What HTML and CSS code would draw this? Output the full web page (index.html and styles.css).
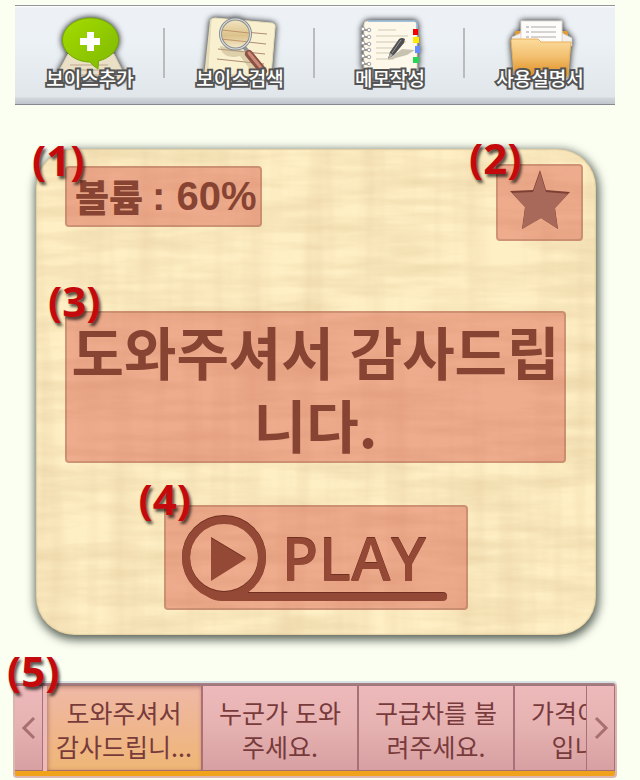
FILE: index.html
```html
<!DOCTYPE html>
<html lang="ko">
<head>
<meta charset="utf-8">
<meta name="viewport" content="width=device-width, initial-scale=1">
<title>보이스</title>
<link rel="stylesheet" href="styles.css">
</head>
<body>
<nav class="toolbar">
  <button class="tool" type="button">
    <svg class="tool-icon" viewBox="0 0 90 68" aria-hidden="true">
      <defs><linearGradient id="green" x1="0" y1="0" x2="1" y2="1"><stop offset="0" stop-color="#a5dc00"/><stop offset="1" stop-color="#7db800"/></linearGradient></defs>
      <path d="M23 42H69L82 68H9Z" fill="#e9e0c6" stroke="#d3c9ae"/>
      <path d="M25 53H63M22 58H67M19 63H71" stroke="#c0a68d"/>
      <path d="M45.500 6C61 6 73.500 16 73.500 28C73.500 38 65 46 53.500 49L53 57Q48 54 45 50C30 50 17.500 40 17.500 28C17.500 16 30 6 45.500 6Z" fill="url(#green)" stroke="#72a800"/>
      <path d="M42 20H49V26H55V33H49V39H42V33H35V26H42Z" fill="#fff"/>
    </svg>
    <span class="tool-label">보이스추가</span>
  </button>
  <button class="tool" type="button">
    <svg class="tool-icon" viewBox="0 0 90 68" aria-hidden="true">
      <defs><linearGradient id="lens" x1="0" y1="0" x2="0" y2="1"><stop offset="0" stop-color="#f2e7c4"/><stop offset=".55" stop-color="#dcc28a"/><stop offset="1" stop-color="#f5ecd0"/></linearGradient></defs>
      <path d="M15 8Q16 6 20 6L19 60L76 66V68L9 64Z" fill="#e6dcbb"/>
      <path d="M20 6L77 11Q81 12 80 16L76 64Q76 68 72 67L16 60Q12 59 13 55L16 10Q16 6 20 6Z" fill="#f9f0cf" stroke="#e6dcb8"/>
      <path d="M27 18L72 22M25 27L71 32M23 37L70 42M22 47L69 52" stroke="#b08b76"/>
      <path d="M25 34Q27 48 45 44L54 56L66 62L54 40Z" fill="#b9a67d" opacity=".45"/>
      <circle cx="40.500" cy="22" r="15" fill="url(#lens)"/>
      <path d="M27 18L54 21M26 27L54 30" stroke="#b07d57" stroke-width="1" opacity=".7"/>
      <path d="M49 35L54 41" stroke="#929292" stroke-width="4"/>
      <path d="M54 42L68 59" stroke="#8d5144" stroke-width="8" stroke-linecap="round"/>
      <path d="M54 41L67 57" stroke="#ca8b78" stroke-width="3" stroke-linecap="round"/>
      <circle cx="40.500" cy="22" r="15" fill="none" stroke="#888c8e" stroke-width="3"/>
      <circle cx="40.500" cy="22" r="15" fill="none" stroke="#dadddd" stroke-width="1.200"/>
    </svg>
    <span class="tool-label">보이스검색</span>
  </button>
  <button class="tool" type="button">
    <svg class="tool-icon" viewBox="0 0 90 68" aria-hidden="true">
      <path d="M23 9H69Q72 9 72 12V66H19V13Q19 9 23 9Z" fill="#fdf8e9" stroke="#e4dcc5"/>
      <path d="M23 9H69Q72 9 72 13V17" fill="none" stroke="#8db3d8" stroke-width="1.500"/>
      <path d="M33 18H51M31 24H63M31 30H61M31 36H54M31 41H52M31 47H49" stroke="#cfcbb4"/>
      <g fill="none" stroke="#777" stroke-width="1.500"><path d="M24 18H18M24 25H18M24 32H18M24 38H18M24 45H18M24 52H18M24 59H18"/></g>
      <g fill="#fff" stroke="#a2a2a2"><circle cx="24" cy="18" r="1.800"/><circle cx="24" cy="25" r="1.800"/><circle cx="24" cy="32" r="1.800"/><circle cx="24" cy="38" r="1.800"/><circle cx="24" cy="45" r="1.800"/><circle cx="24" cy="52" r="1.800"/><circle cx="18" cy="17" r="1.800"/><circle cx="18" cy="24" r="1.800"/><circle cx="18" cy="31" r="1.800"/><circle cx="18" cy="37" r="1.800"/><circle cx="18" cy="44" r="1.800"/><circle cx="18" cy="51" r="1.800"/></g>
      <path d="M43 48L57 37L70 38L62 43Z" fill="#a59e8c" opacity=".6"/>
      <path d="M43 47L45 40L54 27Q57 25 60 27L59 31L49 43Z" fill="#505050"/>
      <path d="M47 41L56 28" stroke="#999"/>
      <path d="M43 47L45 41L48 43Z" fill="#aaa"/>
      <path d="M68 17H73V23H68Z" fill="#f20000"/><path d="M68 25H74V31H68Z" fill="#ffe900"/><path d="M70 34H75V41H70Z" fill="#648dff"/><path d="M68 45H74V51H68Z" fill="#27d654"/>
    </svg>
    <span class="tool-label">메모작성</span>
  </button>
  <button class="tool" type="button">
    <svg class="tool-icon" viewBox="0 0 90 68" aria-hidden="true">
      <defs><linearGradient id="folder" x1="0" y1="0" x2="0" y2="1"><stop offset="0" stop-color="#fbdc9c"/><stop offset=".45" stop-color="#f3c071"/><stop offset="1" stop-color="#df8c1e"/></linearGradient></defs>
      <path d="M21 19H71Q73 19 73 22V35H20V22Q20 19 21 19Z" fill="#e39a32"/>
      <path d="M17 25L26 21V34H17ZM67 21L77 26V34H67Z" fill="#f2f1ef" stroke="#cfcbc5" stroke-width=".600"/>
      <path d="M26 9H67V34H26Z" fill="#fefcfa" stroke="#e2ddd8"/>
      <path d="M36 15H61M36 20H61M36 25H61" stroke="#aaa"/><path d="M31 15H34M31 20H34M31 25H34" stroke="#999"/>
      <path d="M16 28Q17 27 19 27H43L46 30H76L73 62Q73 65 70 65H23Q20 65 19 61Z" fill="url(#folder)" stroke="#e8af58"/>
    </svg>
    <span class="tool-label">사용설명서</span>
  </button>
</nav>

<main class="card">
  <svg class="grain" aria-hidden="true">
    <filter id="fiber" x="0" y="0" width="100%" height="100%">
      <feTurbulence type="fractalNoise" baseFrequency="0.010 0.070" numOctaves="4" seed="8"/>
      <feColorMatrix values="0 0 0 0 .74  0 0 0 0 .58  0 0 0 0 .32  .900 0 0 0 -.300"/>
    </filter>
    <filter id="weave" x="0" y="0" width="100%" height="100%">
      <feTurbulence type="fractalNoise" baseFrequency="0.040 0.003" numOctaves="3" seed="3"/>
      <feColorMatrix values="0 0 0 0 .78  0 0 0 0 .58  0 0 0 0 .34  .800 0 0 0 -.340"/>
    </filter>
    <rect width="100%" height="100%" filter="url(#fiber)"/>
    <rect width="100%" height="100%" filter="url(#weave)"/>
  </svg>
  <div class="card-top">
    <div class="zone volume"><b class="mark">(1)</b><span>볼륨</span> <span class="volume-value">: 60%</span></div>
    <button class="zone favorite" type="button" aria-label="즐겨찾기">
      <b class="mark">(2)</b>
      <svg class="star" viewBox="0 0 62 62" aria-hidden="true">
        <defs><clipPath id="star-clip"><path d="M31 1L37 21L61 23L46 39L49 60L32 49L13 60L16 38L1 22L24 21Z"/></clipPath></defs>
        <g clip-path="url(#star-clip)">
          <path d="M0 0H62V62H0Z" fill="#7e3f35"/>
          <path class="star-face" d="M31 3L37 23L61 25L46 41L49 62L32 51L13 62L16 40L1 24L24 23Z"/>
        </g>
      </svg>
    </button>
  </div>
  <section class="zone message"><b class="mark">(3)</b>도와주셔서 감사드립니다.</section>
  <button class="zone play" type="button">
    <b class="mark">(4)</b>
    <svg class="play-art" viewBox="0 0 300 101" aria-hidden="true">
      <g class="carved">
        <circle class="ring" cx="58" cy="51" r="38"/>
        <path d="M58 86Q74 86 84 78L81 86H277A4 4 0 0 1 277 94H56Q48 94 42 90L58 88Z"/>
        <path d="M45 31L80 52L45 74Z"/>
      </g>
    </svg>
    <span class="play-label">PLAY</span>
  </button>
</main>

<section class="strip">
  <b class="mark">(5)</b>
  <button class="arrow" type="button" aria-label="이전"><svg class="chevron" viewBox="0 0 16 26" aria-hidden="true"><path d="M13 3L3 13L13 23"/></svg></button>
  <div class="phrases">
    <button class="phrase selected" type="button">도와주셔서<br>감사드립니...</button>
    <button class="phrase" type="button">누군가 도와<br>주세요.</button>
    <button class="phrase" type="button">구급차를 불<br>려주세요.</button>
    <button class="phrase" type="button">가격이 얼마<br>입니까?</button>
  </div>
  <button class="arrow" type="button" aria-label="다음"><svg class="chevron" viewBox="0 0 16 26" aria-hidden="true"><path d="M3 3L13 13L3 23"/></svg></button>
</section>
</body>
</html>
```
FILE: styles.css
```css
* { box-sizing: border-box; }
body {
  margin: 0;
  padding: 5px 25px 2px 15px;
  background: #fbfff2;
  font-family: "Noto Sans CJK KR", sans-serif;
}
button {
  margin: 0;
  padding: 0;
  border: 0;
  background: none;
  color: inherit;
  font: inherit;
}
svg { display: block; }

.toolbar {
  display: grid;
  grid-template-columns: repeat(4, 1fr);
  height: 100px;
  border-top: 1px solid #92969a;
  border-bottom: 1px solid #85898d;
  background: linear-gradient(#fff 0, #edf1f6 2px, #ecf1f5 35px, #e1e6ea 91px, #d2d7dc 92px, #bfc5cb 98px);
}
.tool {
  display: flex;
  flex-direction: column;
  align-items: center;
  padding-top: 6px;
  background: linear-gradient(#bbb, #bbb) 100% 22px / 2px 50px no-repeat;
}
.tool:last-child { background: none; }
.tool-icon {
  width: 90px;
  height: 68px;
  margin-bottom: -14px;
  filter: drop-shadow(0 0 3px rgba(0, 0, 0, .6)) drop-shadow(0 0 2px rgba(0, 0, 0, .4));
}
.tool-label {
  position: relative;
  font-size: 19px;
  line-height: 24px;
  font-weight: 500;
  color: #fff;
  -webkit-text-stroke: 4px #555;
  paint-order: stroke fill;
  white-space: nowrap;
}

.card {
  position: relative;
  display: flex;
  flex-direction: column;
  align-items: center;
  margin: 44px 19px 0 21px;
  padding: 15px 30px 25px 29px;
  border-radius: 38px;
  background: #ffefc4;
  box-shadow: 1px 3px 10px 2px rgba(40, 50, 40, .75);
}
.grain {
  position: absolute;
  inset: 0;
  width: 100%;
  height: 100%;
  border-radius: 38px;
  box-shadow: inset 0 0 2px rgba(90, 70, 30, .6);
}
.card-top {
  display: flex;
  justify-content: space-between;
  align-items: flex-start;
  align-self: stretch;
  margin-right: -17px;
}
.zone {
  position: relative;
  border: 2px solid rgba(140, 95, 65, .32);
  border-radius: 4px;
  background: rgba(212, 72, 60, .4);
  color: #874433;
}
.mark {
  position: absolute;
  top: -36px;
  left: -35px;
  z-index: 1;
  color: #c40a0c;
  font: bold 42px/56px "Noto Sans", sans-serif;
  text-shadow: 2px 3px 3px rgba(0, 0, 0, .65);
}
.volume {
  display: flex;
  align-items: center;
  gap: 9px;
  height: 61px;
  margin-top: 2px;
  padding: 0 3px 0 8px;
  font-size: 37px;
  line-height: 55px;
  font-weight: 900;
  white-space: nowrap;
}
.volume-value { font: bold 40px/55px "Liberation Sans", sans-serif; }
.favorite {
  display: grid;
  place-items: start center;
  width: 87px;
  height: 77px;
  padding-top: 3px;
}
.favorite .mark { left: -29px; }
.star { width: 62px; height: 62px; }
.star-face { fill: #a8695a; }
.carved { fill: #934936; filter: drop-shadow(0 -1px 0 #702f20); }
.ring { fill: none; stroke: #934936; stroke-width: 8px; }
.message {
  align-self: stretch;
  margin-top: 70px;
  padding: 1px 0;
  font-size: 57px;
  line-height: 73px;
  font-weight: 700;
  text-align: center;
  word-break: break-all;
}
.message .mark, .strip .mark { top: -40px; }
.message .mark { left: -19px; }
.play {
  display: grid;
  align-items: center;
  margin-top: 42px;
}
.play .mark { left: -27px; }
.play-art, .play-label { grid-area: 1 / 1; }
.play-art { width: 300px; height: 101px; }
.play-label {
  padding-left: 116px;
  color: #934936;
  font: 600 60px/80px "Open Sans", sans-serif;
  text-align: left;
  text-shadow: 0 -1px 0 #702f20;
}

.strip {
  position: relative;
  display: flex;
  height: 95px;
  margin: 48px -2px 0;
  padding: 3px 0 5px;
  border: 2px solid #dcb5ae;
  border-top: 0;
  border-radius: 4px;
  background: linear-gradient(#a98086 0, #9b757a 3px, transparent 3px, transparent 88px, #f0a31a 88px);
  box-shadow: 0 -2px #d9e2e3;
  color: #783b3b;
}
.strip .mark { left: -8px; }
.arrow, .phrase {
  border-right: 2px solid #a97078;
  border-bottom: 1px solid #aa6e6d;
  background: linear-gradient(#edb9ba, #e7b2b2 45%, #d7a0a2);
}
.arrow {
  flex: 0 0 28px;
  display: grid;
  place-items: center;
  border-right-width: 1px;
}
.chevron {
  width: 16px;
  height: 26px;
  fill: none;
  stroke: #a76f70;
  stroke-width: 3px;
}
.phrases {
  flex: 1;
  display: flex;
  min-width: 0;
  overflow: hidden;
  padding-left: 4px;
  border-right: 1px solid #a97078;
  background: #edbabb;
}
.phrase {
  flex: 0 0 156px;
  padding-top: 2px;
  font-size: 25px;
  line-height: 34px;
  white-space: nowrap;
}
.phrase.selected {
  background: linear-gradient(#efb9a6, #efb68e 50%, #efb676);
  box-shadow: inset 1px 1px 4px #b47a66;
}
```
